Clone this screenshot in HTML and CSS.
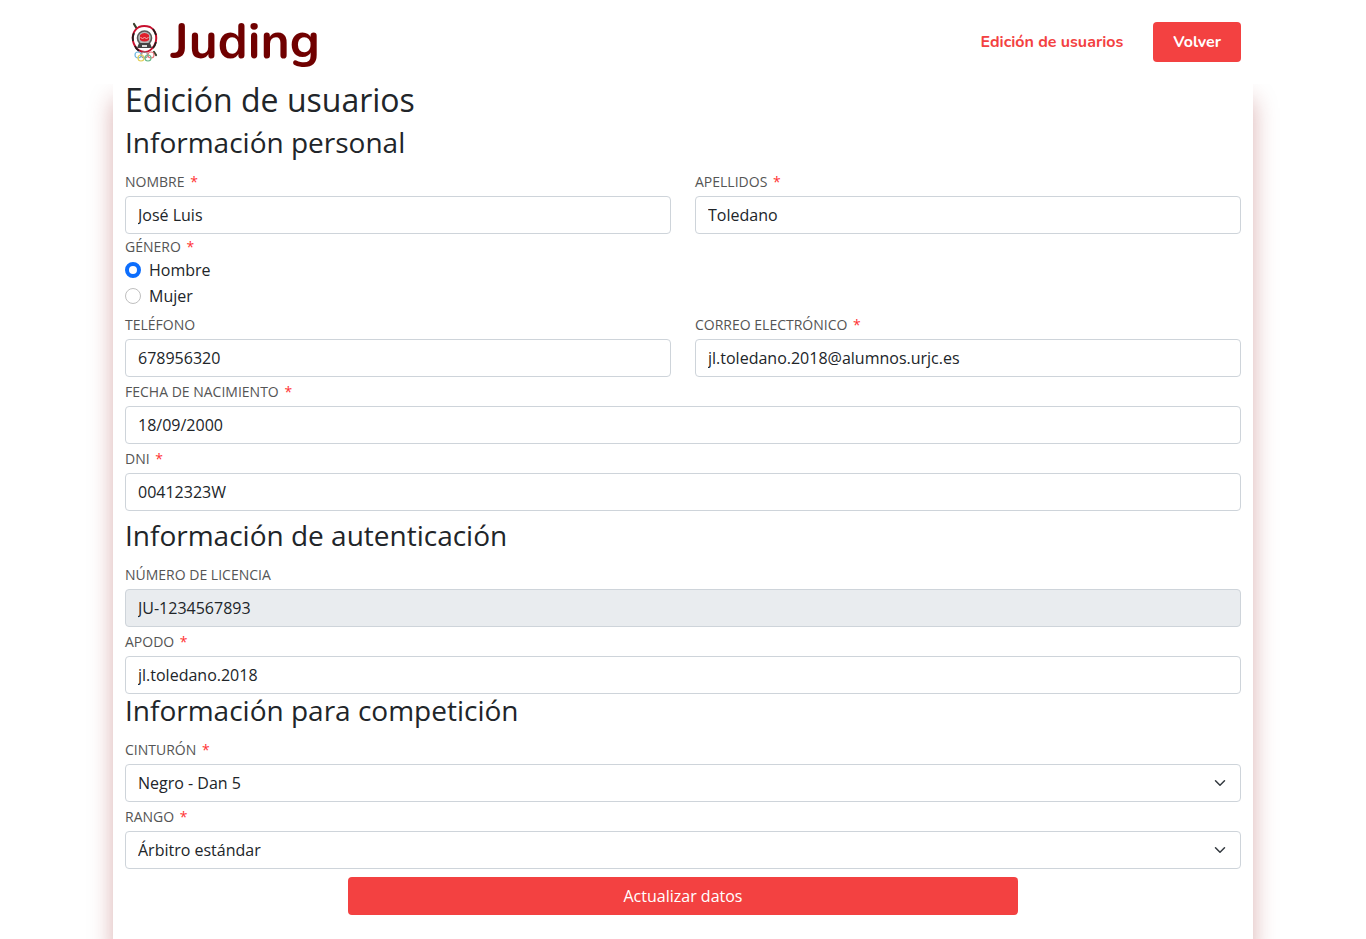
FILE: index.html
```html
<!DOCTYPE html>
<html lang="es">
<head>
<meta charset="utf-8">
<meta name="viewport" content="width=device-width, initial-scale=1">
<title>Juding - Edición de usuarios</title>
<link rel="stylesheet" href="styles.css">
</head>
<body>
<header class="header">
  <div class="container header-inner">
    <a class="logo" href="#">
      <svg class="emblem" viewBox="0 0 30 42" aria-hidden="true">
        <path d="M5 3l3 5M25 31l2 3" stroke="#39402c" stroke-width="2.200" stroke-linecap="round"/>
        <path d="M10 6Q15 4 21 6Q26 9 27 14Q28 20 25 25Q21 31 16 31Q9 31 6 25Q3 20 4 14Q5 9 10 6Z" fill="#fff" stroke="#c8102e" stroke-width="2"/>
        <path d="M24 8Q26 11 27 14M27 21Q26 25 24 27M10 30Q7 28 6 25M4 20Q3 16 5 12" fill="none" stroke="#251b1d" stroke-width="1.800"/>
        <circle cx="15.500" cy="17" r="7" fill="#b8b8b8" stroke="#5a5a5a" stroke-width="1.600"/>
        <path d="M10 22h11l2 5H8z" fill="#444"/>
        <path d="M13 24h5v2h-5z" fill="#ddd"/>
        <path d="M11 14Q15.500 10 20 14V19Q15.500 22 11 19Z" fill="#e01f2b"/>
        <path d="M11.500 16l2 2 2-2 2 2 2-2" fill="none" stroke="#f4b9b9"/>
        <g fill="none" stroke-width="1.200">
          <circle cx="9" cy="34" r="3" stroke="#70b7e0"/>
          <circle cx="15.500" cy="34" r="3" stroke="#999"/>
          <circle cx="22" cy="34" r="3" stroke="#e9787c"/>
          <circle cx="12" cy="37" r="3" stroke="#e3cf58"/>
          <circle cx="19" cy="37" r="3" stroke="#68b98a"/>
        </g>
      </svg>
      <span class="wordmark">Juding</span>
    </a>
    <nav class="nav">
      <a class="nav-link" href="#">Edición de usuarios</a>
      <a class="nav-button" href="#">Volver</a>
    </nav>
  </div>
</header>
<main class="container panel">
  <form>
    <h1 class="title">Edición de usuarios</h1>
    <section>
      <h2 class="subtitle">Información personal</h2>
      <div class="row">
        <div>
          <label class="label" for="nombre">Nombre <span class="required">*</span></label>
          <input class="control" id="nombre" type="text" value="José Luis">
        </div>
        <div>
          <label class="label" for="apellidos">Apellidos <span class="required">*</span></label>
          <input class="control" id="apellidos" type="text" value="Toledano">
        </div>
      </div>
      <fieldset class="choices">
        <legend class="label legend">Género <span class="required">*</span></legend>
        <div class="check"><input class="radio" id="hombre" type="radio" name="genero" checked><label for="hombre">Hombre</label></div>
        <div class="check"><input class="radio" id="mujer" type="radio" name="genero"><label for="mujer">Mujer</label></div>
      </fieldset>
      <div class="row">
        <div>
          <label class="label" for="telefono">Teléfono</label>
          <input class="control" id="telefono" type="tel" value="678956320">
        </div>
        <div>
          <label class="label" for="correo">Correo electrónico <span class="required">*</span></label>
          <input class="control" id="correo" type="email" value="jl.toledano.2018@alumnos.urjc.es">
        </div>
      </div>
      <label class="label" for="fecha">Fecha de nacimiento <span class="required">*</span></label>
      <input class="control" id="fecha" type="text" value="18/09/2000">
      <label class="label" for="dni">DNI <span class="required">*</span></label>
      <input class="control" id="dni" type="text" value="00412323W">
    </section>
    <section class="section-spaced">
      <h2 class="subtitle">Información de autenticación</h2>
      <label class="label" for="licencia">Número de licencia</label>
      <input class="control" id="licencia" type="text" value="JU-1234567893" disabled>
      <label class="label" for="apodo">Apodo <span class="required">*</span></label>
      <input class="control" id="apodo" type="text" value="jl.toledano.2018">
    </section>
    <section>
      <h2 class="subtitle">Información para competición</h2>
      <label class="label" for="cinturon">Cinturón <span class="required">*</span></label>
      <div class="select-box">
        <select class="control select" id="cinturon"><option>Negro - Dan 5</option></select>
        <svg class="chevron" viewBox="0 0 16 16" aria-hidden="true"><path d="M2 5l6 6 6-6"/></svg>
      </div>
      <label class="label" for="rango">Rango <span class="required">*</span></label>
      <div class="select-box">
        <select class="control select" id="rango"><option>Árbitro estándar</option></select>
        <svg class="chevron" viewBox="0 0 16 16" aria-hidden="true"><path d="M2 5l6 6 6-6"/></svg>
      </div>
    </section>
    <button class="submit" type="submit">Actualizar datos</button>
  </form>
</main>
</body>
</html>
```
FILE: styles.css
```css
*, *::before, *::after { box-sizing: border-box; }
body {
  margin: 0;
  min-height: 100vh;
  display: flex;
  flex-direction: column;
  overflow-x: hidden;
  background: #fff;
  color: #212529;
  font: 16px/24px "Open Sans", sans-serif;
}
.container { width: 100%; max-width: 1140px; margin: 0 auto; padding: 0 12px; }
.header { position: relative; z-index: 1; background: #fff; }
.header-inner {
  display: flex;
  align-items: center;
  justify-content: space-between;
  height: 84px;
}
.logo {
  display: flex;
  align-items: center;
  gap: 12px;
  padding-left: 4px;
  color: #700000;
  text-decoration: none;
}
.emblem { width: 30px; height: 42px; }
.wordmark { font: 700 50px/60px Nunito, "Open Sans", sans-serif; }
.nav { display: flex; align-items: center; gap: 30px; font: 700 16px/24px Nunito, "Open Sans", sans-serif; }
.nav-link { color: #f34141; text-decoration: none; }
.nav-button {
  padding: 8px 20px;
  border-radius: 4px;
  background: #f34141;
  color: #fff;
  text-decoration: none;
}
.panel {
  flex: 1;
  margin-top: -4px;
  padding-bottom: 24px;
  box-shadow: 0 20px 22px rgba(150, 26, 26, 0.34);
}
.panel form { position: relative; z-index: 2; }
.title, .subtitle { margin: 0 0 8px; font-weight: 400; }
.title { margin-bottom: 6px; font-size: 32px; line-height: 40px; }
.subtitle { font-size: 28px; line-height: 33px; }
.section-spaced { padding-top: 8px; }
.row { display: grid; grid-template-columns: 1fr 1fr; column-gap: 24px; }
.label {
  display: block;
  padding: 4px 0;
  color: #555;
  font-size: 14px;
  line-height: 21px;
  text-transform: uppercase;
}
.required { margin-left: 2px; color: #f33; }
.control {
  display: block;
  width: 100%;
  height: 38px;
  margin: 0;
  padding: 6px 12px;
  border: 1px solid #ced4da;
  border-radius: 4px;
  background: #fff;
  color: #212529;
  font: inherit;
}
.control:disabled { background: #e9ecef; }
.choices { margin: 0; padding: 0; border: 0; }
.legend { padding: 2px 0 1px; }
.check { display: flex; align-items: center; gap: 8px; margin-bottom: 2px; }
.radio {
  appearance: none;
  width: 16px;
  height: 16px;
  margin: 0;
  border: 1px solid #bfbfbf;
  border-radius: 50%;
  background: #fff;
}
.radio:checked { border: 4px solid #0d6efd; }
.select-box { display: grid; align-items: center; }
.select-box > * { grid-area: 1 / 1; }
.select { appearance: none; padding-right: 36px; }
.chevron {
  justify-self: end;
  width: 16px;
  height: 12px;
  margin-right: 13px;
  fill: none;
  stroke: #343a40;
  stroke-width: 2;
  stroke-linecap: round;
  stroke-linejoin: round;
  pointer-events: none;
}
.submit {
  display: block;
  width: 60%;
  margin: 8px auto 0;
  padding: 7px 12px;
  border: 0;
  border-radius: 4px;
  background: #f34141;
  color: #fff;
  font: inherit;
}
```
